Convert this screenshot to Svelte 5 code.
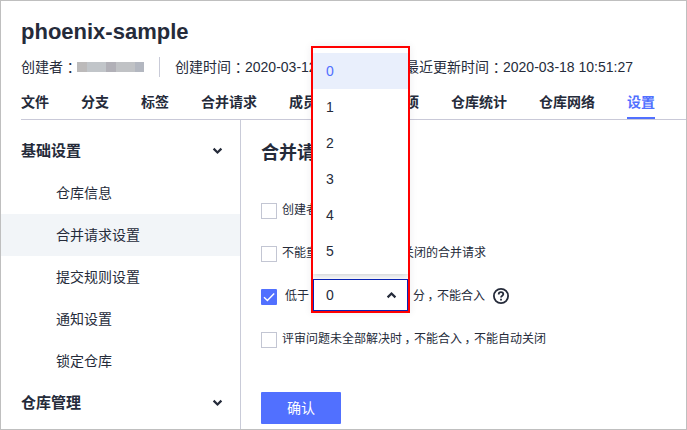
<script>
  const tabs = ['文件', '分支', '标签', '合并请求', '成员', '关联工作项', '仓库统计', '仓库网络', '设置'];
  const items = ['仓库信息', '合并请求设置', '提交规则设置', '通知设置', '锁定仓库'];
  const options = [0, 1, 2, 3, 4, 5];
  let selected = $state(0);
</script>

{#snippet chevron(up)}
  <svg class="chevron" class:up width="11" height="8" viewBox="0 0 11 8">
    <path d="M1.6 1.6 5.5 5.5 9.4 1.6" fill="none" stroke="#252b3a" stroke-width="2.2" />
  </svg>
{/snippet}

<div class="page">
  <header>
    <h1>phoenix-sample</h1>
    <div class="meta">
      <span>创建者<i>：</i></span>
      <span class="masked"><b></b><b></b><b></b><b></b><b></b></span>
      <span class="divider"></span>
      <span class="created">创建时间<i>：</i>2020-03-12</span>
      <span>最近更新时间<i>：</i>2020-03-18 10:51:27</span>
    </div>
    <nav>
      {#each tabs as tab}
        <span class="tab" class:active={tab === '设置'}>{tab}</span>
      {/each}
    </nav>
  </header>

  <div class="body">
    <aside>
      <div class="group">基础设置{@render chevron(false)}</div>
      {#each items as item}
        <div class="item" class:current={item === '合并请求设置'}>{item}</div>
      {/each}
      <div class="group">仓库管理{@render chevron(false)}</div>
    </aside>

    <main>
      <h2>合并请求设置</h2>
      <div class="row"><span class="box"></span><span class="label">创建者不能合入</span></div>
      <div class="row"><span class="box"></span><span class="label">不能重新打开一个已经关闭的合并请求</span></div>
      <div class="row score">
        <span class="box checked">
          <svg width="16" height="16" viewBox="0 0 16 16"><path d="M3 8.2 6.4 11.5 13.2 4.4" fill="none" stroke="#fff" stroke-width="1.4" /></svg>
        </span>
        <span class="label">低于</span>
        <span class="slot"></span>
        <span class="label">分<i>，</i>不能合入</span>
        <svg class="help" width="16" height="16" viewBox="0 0 16 16">
          <circle cx="8" cy="8" r="7.1" fill="none" stroke="#252b3a" stroke-width="1.8" />
          <path d="M5.7 6.5C5.7 5 6.7 4.2 8 4.2s2.3.8 2.3 2.1C10.3 7.7 8 7.8 8 9.6" fill="none" stroke="#252b3a" stroke-width="1.8" />
          <path d="M7.1 10.8h1.8v1.7H7.1z" fill="#252b3a" />
        </svg>
      </div>
      <div class="row"><span class="box"></span><span class="label">评审问题未全部解决时<i>，</i>不能合入<i>，</i>不能自动关闭</span></div>
      <button>确认</button>
    </main>
  </div>

  <div class="picker">
    <div class="menu">
      {#each options as n}
        <div class="option" class:chosen={n === selected}>{n}</div>
      {/each}
    </div>
    <div class="select"><span>{selected}</span>{@render chevron(true)}</div>
  </div>
</div>

<style>
  .page {
    position: relative;
    box-sizing: border-box;
    width: 687px;
    height: 430px;
    overflow: hidden;
    border: 1px solid #bfbfbf;
    background: #fff;
    color: #252b3a;
    font: 14px/20px "Liberation Sans", "Noto Sans CJK SC", sans-serif;
    white-space: nowrap;
    display: flex;
    flex-direction: column;
  }
  header { padding-left: 20px; height: 119px; box-sizing: border-box; flex: none; }
  h1 { margin: 0; padding-top: 18px; font-size: 22px; line-height: 26px; height: 26px; }
  .meta { display: flex; align-items: center; margin-top: 12px; height: 20px; }
  .meta > span { flex: none; }
  i {
    display: inline-block;
    width: 1em;
    text-indent: 0.26em;
    font-style: normal;
    line-height: 1;
  }
  .label i { text-indent: 0.2em; }
  .meta .masked { display: flex; height: 10px; width: 67px; }
  .masked b { width: 10px; background: #bcbaba; }
  .masked b:nth-child(2) { width: 19px; background: #c1c5c9; }
  .masked b:nth-child(3) { background: #b1b0b7; }
  .masked b:nth-child(4) { width: 19px; background: #c0c2c5; }
  .masked b:nth-child(5) { width: 9px; background: #b3b7c0; }
  .divider { width: 1px; height: 20px; margin: 0 15px; background: #c9cbd8; }
  .meta .created { width: 230px; overflow: hidden; }
  nav { display: flex; gap: 32px; height: 43px; border-bottom: 1px solid #c9c9d8; box-sizing: border-box; }
  .tab { flex: none; box-sizing: border-box; height: 42px; padding-top: 15px; font-weight: bold; }
  .tab.active { color: #5170ff; border-bottom: 2px solid #5170ff; }
  .body { display: flex; flex: 1; min-height: 0; }
  aside { width: 240px; flex: none; box-sizing: border-box; border-right: 1px solid #c9cbd8; padding-top: 10px; }
  .group {
    display: flex;
    align-items: center;
    justify-content: space-between;
    height: 42px;
    padding: 0 17px 0 20px;
    font-size: 15px;
    font-weight: bold;
  }
  .item { height: 42px; line-height: 42px; padding-left: 55px; }
  .current { background: #f2f5f8; }
  .chevron { display: block; }
  .up { transform: scaleY(-1); }
  main { padding-left: 20px; }
  h2 { margin: 20px 0 36px; font-size: 18px; line-height: 26px; }
  .row { display: flex; align-items: center; height: 18px; margin-bottom: 25px; font-size: 12px; }
  .box { box-sizing: border-box; width: 16px; height: 16px; border: 1px solid #c3c6d3; margin-right: 5px; flex: none; }
  .checked { border: 0; background: #5170ff; border-radius: 1px; margin-right: 8px; }
  .checked svg { display: block; }
  .label { line-height: 16px; padding-bottom: 2px; }
  .slot { width: 104px; }
  .help { margin: -2px 0 0 8px; }
  button {
    display: block;
    width: 80px;
    height: 32px;
    margin-top: 43px;
    padding: 0;
    border: 0;
    border-radius: 1px;
    background: #5170ff;
    color: #fff;
    font: inherit;
  }
  .picker {
    position: absolute;
    left: 310px;
    top: 45px;
    box-sizing: border-box;
    width: 99px;
    height: 267px;
    border: 2px solid #f00;
    background: #fff;
    overflow: hidden;
    display: flex;
    flex-direction: column;
    justify-content: space-between;
    box-shadow: 0 0 8px rgba(37, 43, 58, 0.08);
  }
  .menu { box-sizing: border-box; height: 226px; padding-top: 5px; box-shadow: 0 1px 7px rgba(37, 43, 58, 0.28); }
  .option { height: 36px; line-height: 36px; padding-left: 13px; }
  .chosen { background: #e9effc; color: #5170ff; }
  .select {
    display: flex;
    align-items: center;
    justify-content: space-between;
    box-sizing: border-box;
    height: 32px;
    padding: 0 10px 0 12px;
    border: 1px solid #0a22b4;
    background: #fff;
    position: relative;
  }
</style>
